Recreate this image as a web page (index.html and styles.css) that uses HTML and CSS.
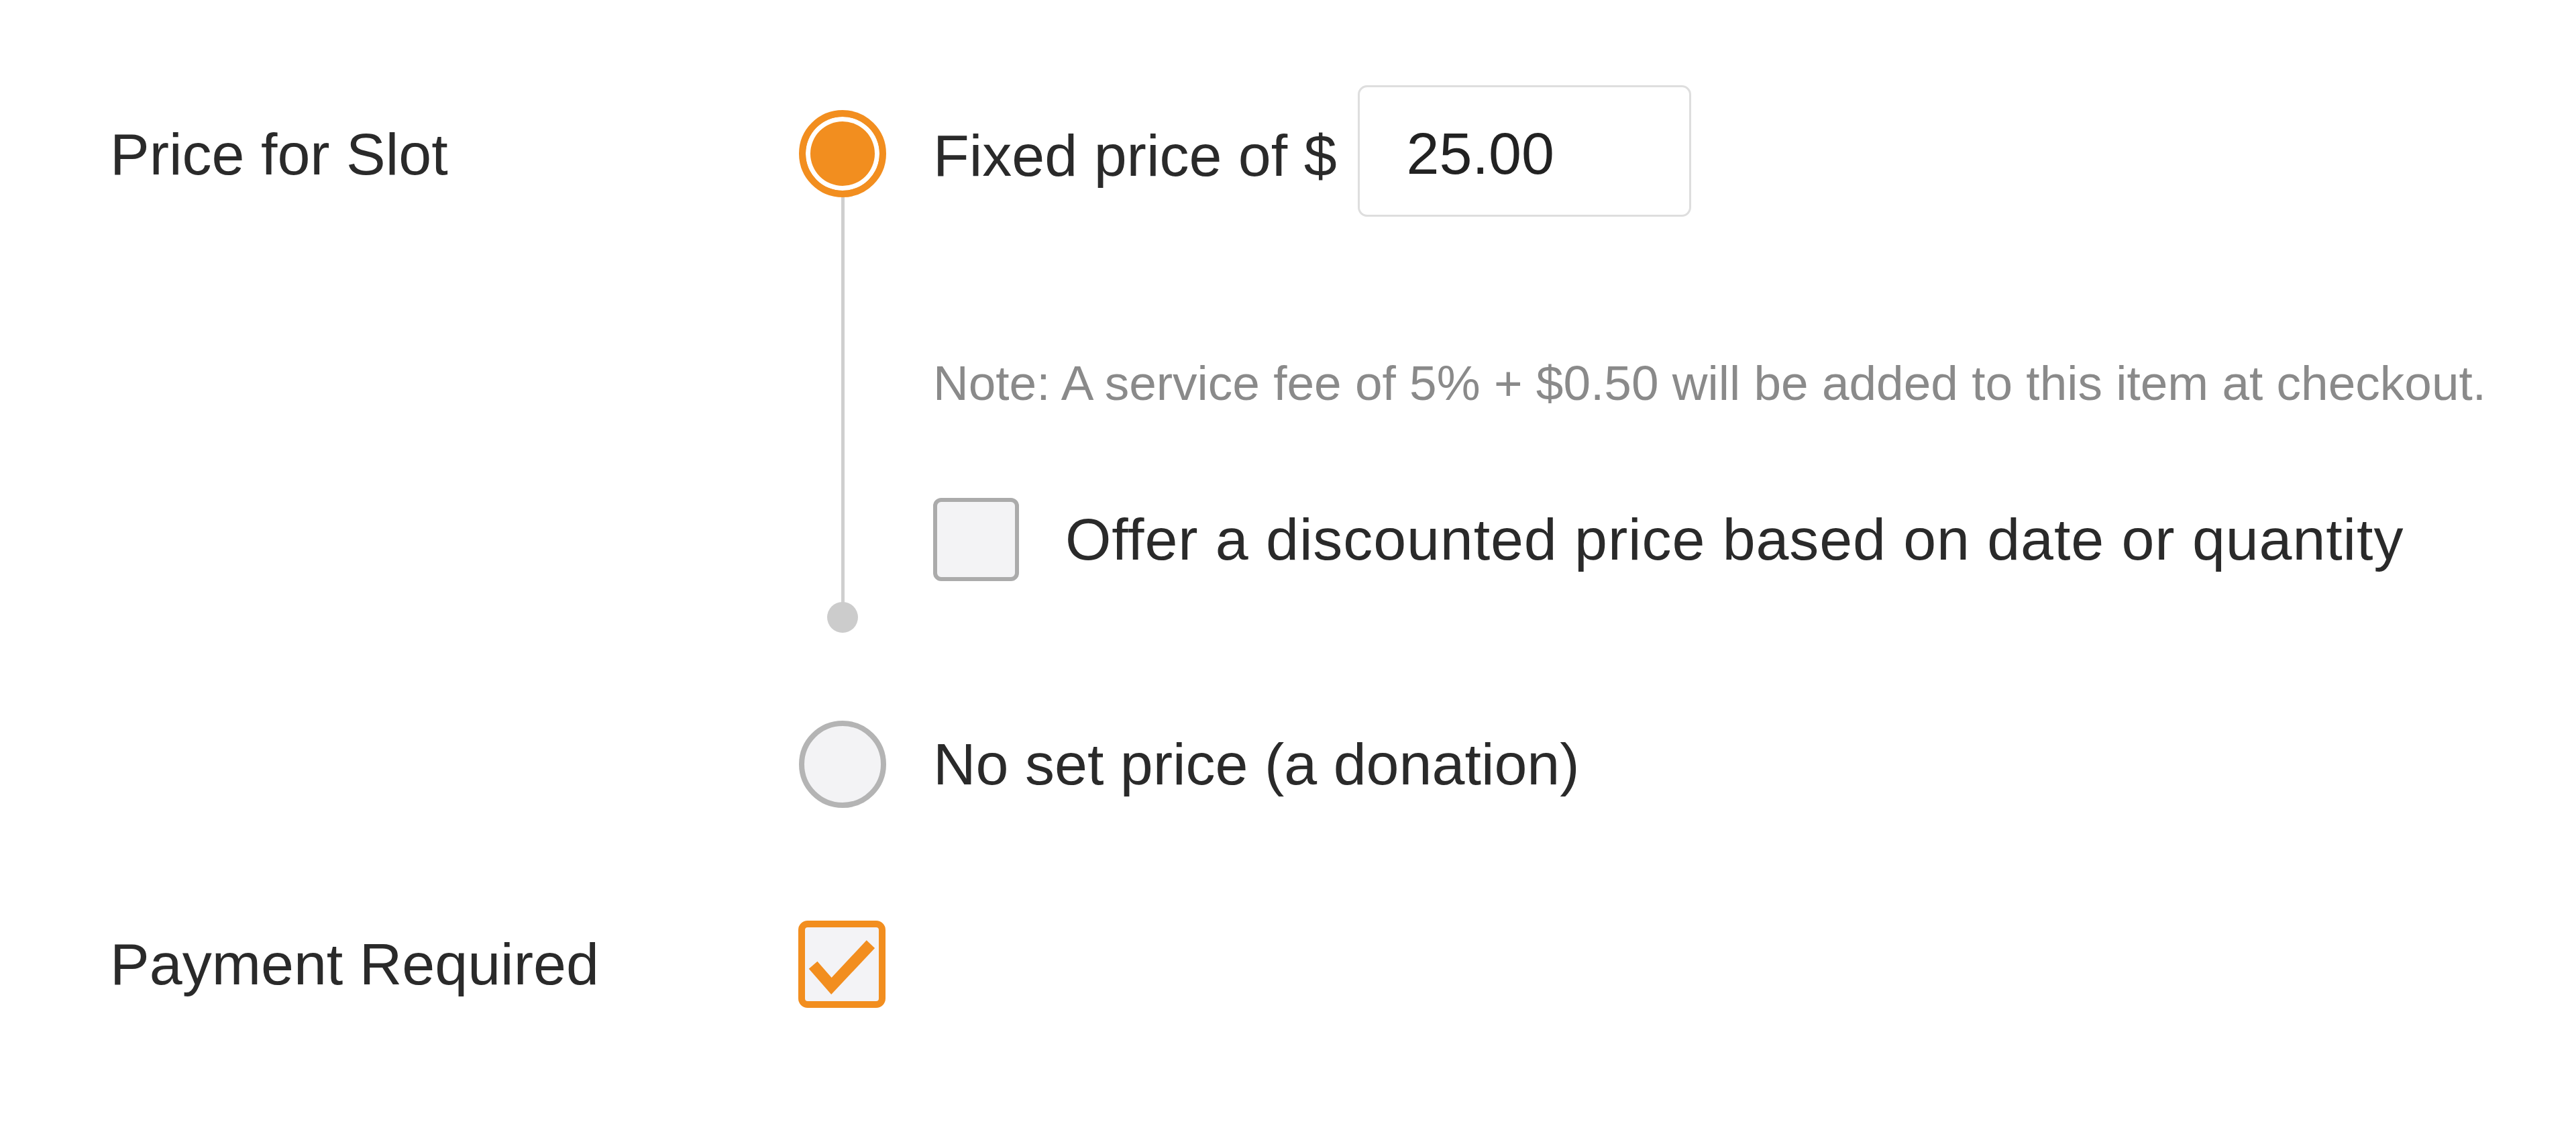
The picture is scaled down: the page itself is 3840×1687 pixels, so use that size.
FILE: index.html
```html
<!DOCTYPE html>
<html lang="en">
<head>
<meta charset="utf-8">
<title>Price for Slot</title>
<link rel="stylesheet" href="styles.css">
</head>
<body>
<form class="form">
  <div class="row row-price">
    <div class="label label-price">Price for Slot</div>
    <div class="controls">
      <div class="option option-fixed">
        <div class="rail">
          <span class="radio radio-checked"></span>
          <span class="rail-line"></span>
          <span class="rail-dot"></span>
        </div>
        <div class="option-body">
          <div class="fixed-line">
            <span class="opt-text">Fixed price of $</span>
            <span class="price-input">25.00</span>
          </div>
          <div class="note">Note: A service fee of 5% + $0.50 will be added to this item at checkout.</div>
          <div class="check-line">
            <span class="checkbox"></span>
            <span class="opt-text">Offer a discounted price based on date or quantity</span>
          </div>
        </div>
      </div>
      <div class="option option-donation">
        <span class="radio"></span>
        <span class="opt-text">No set price (a donation)</span>
      </div>
    </div>
  </div>
  <div class="row row-payment">
    <div class="label">Payment Required</div>
    <div class="controls">
      <span class="checkbox checkbox-checked">
        <svg class="check-icon" viewBox="0 0 100 100"><polyline points="17,51 38,75 83,27" /></svg>
      </span>
    </div>
  </div>
</form>
</body>
</html>
```
FILE: styles.css
```css
html, body {
  margin: 0;
  padding: 0;
  background: #ffffff;
}
body {
  font-family: "Liberation Sans", Arial, Helvetica, sans-serif;
  color: #2a2a2a;
  width: 3840px;
  height: 1687px;
  overflow: hidden;
}
.form {
  padding: 127px 0 0 164px;
}
.row {
  display: grid;
  grid-template-columns: 1026px 1fr;
}
.label {
  font-size: 88px;
  line-height: 106px;
}
.label-price {
  padding-top: 50px;
}
.option-fixed {
  display: grid;
  grid-template-columns: 132px 1fr;
  column-gap: 69px;
}
.rail {
  display: flex;
  flex-direction: column;
  align-items: center;
  padding-top: 37px;
}
.radio {
  box-sizing: border-box;
  display: block;
  width: 130px;
  height: 130px;
  border-radius: 50%;
  border: 8px solid #b4b4b4;
  background: #f3f3f5;
  flex: none;
}
.radio-checked {
  border: 10px solid #f28e1f;
  background: #f28e1f;
  box-shadow: inset 0 0 0 7px #ffffff;
}
.rail-line {
  flex: 1;
  width: 5px;
  background: #cfcfcf;
}
.rail-dot {
  width: 46px;
  height: 46px;
  border-radius: 50%;
  background: #cccccc;
  flex: none;
  margin-top: -4px;
}
.option-body {
  padding-bottom: 77px;
}
.fixed-line {
  display: flex;
  align-items: center;
  height: 196px;
}
.opt-text {
  font-size: 88px;
  line-height: 106px;
  white-space: nowrap;
}
.fixed-line .opt-text {
  padding-top: 14px;
}
.check-line .opt-text {
  letter-spacing: 0.9px;
}
.price-input {
  box-sizing: border-box;
  display: flex;
  align-items: center;
  width: 497px;
  height: 196px;
  margin-left: 31px;
  padding: 8px 0 0 70px;
  border: 3px solid #dedede;
  border-radius: 14px;
  font-size: 88px;
  color: #222222;
  background: #ffffff;
}
.note {
  margin-top: 204px;
  font-size: 73px;
  line-height: 88px;
  color: #8a8a8a;
  white-space: nowrap;
}
.check-line {
  display: flex;
  align-items: center;
  gap: 69px;
  margin-top: 127px;
  height: 124px;
}
.checkbox {
  box-sizing: border-box;
  display: block;
  width: 128px;
  height: 124px;
  border: 6px solid #ababab;
  border-radius: 12px;
  background: #f3f3f5;
  flex: none;
}
.option-donation {
  display: flex;
  align-items: center;
  gap: 70px;
  margin-top: 131px;
  padding-left: 1px;
}
.row-payment {
  margin-top: 168px;
  align-items: center;
}
.checkbox-checked {
  width: 130px;
  height: 130px;
  border: 10px solid #f28e1f;
  border-radius: 14px;
  background: #f3f3f6;
  position: relative;
}
.check-icon {
  position: absolute;
  top: -10px;
  left: -10px;
  width: 130px;
  height: 130px;
}
.check-icon polyline {
  fill: none;
  stroke: #f28e1f;
  stroke-width: 13;
  stroke-linecap: butt;
  stroke-linejoin: miter;
}
```
